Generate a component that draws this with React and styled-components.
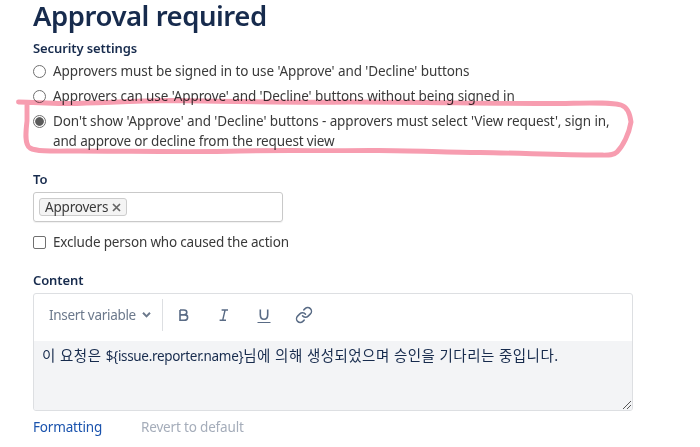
import React from "react";
import styled, { createGlobalStyle } from "styled-components";
import { Link as LinkIcon } from "lucide-react";

const GlobalStyle = createGlobalStyle`
  * { box-sizing: border-box; }
  body {
    margin: 0;
    background: #fff;
    color: #3a3a3a;
    font: 400 13.5px/20px "Noto Sans", "Noto Sans CJK KR", sans-serif;
  }
`;

const Page = styled.main`
  position: relative;
  width: 700px;
  height: 447px;
  padding-left: 33px;
  display: flex;
  flex-direction: column;
  align-items: flex-start;
`;

const Title = styled.h1`
  margin: 0 0 6px;
  height: 32px;
  color: #172b4d;
  font-size: 27.5px;
  font-weight: 600;
  line-height: 31px;
  white-space: nowrap;
  letter-spacing: -0.46px;
`;

const Label = styled.div`
  height: 20px;
  margin-bottom: 3px;
  color: #172b4d;
  font-size: 13px;
  font-weight: 600;
  white-space: nowrap;
  letter-spacing: -0.1px;
`;

const Option = styled.label`
  display: flex;
  align-items: flex-start;
  gap: 7px;
  margin-bottom: ${(p) => p.$gap ?? 5}px;
`;

const OptionText = styled.span`
  white-space: pre;
  letter-spacing: ${(p) => p.$tracking ?? -0.09}px;
`;

const Line = styled.span`
  display: block;
  letter-spacing: ${(p) => p.$tracking ?? -0.09}px;
`;

const Radio = styled.span`
  width: 13px;
  height: 13px;
  margin-top: 4px;
  border: 1px solid #707070;
  border-radius: 50%;
  background: ${(p) => (p.$on ? "radial-gradient(circle, #5a5a5a 3.9px, #fff 4.7px)" : "#fff")};
`;

const Checkbox = styled.span`
  width: 13px;
  height: 13px;
  margin-top: 4px;
  border: 1px solid #707070;
  border-radius: 2px;
  background: #fff;
`;

const TokenField = styled.div`
  display: flex;
  align-items: center;
  width: 250px;
  height: 30px;
  margin-bottom: 10px;
  padding-left: 5px;
  border: 1px solid #c9c9c9;
  border-radius: 3px;
  box-shadow: 0 1px 1px rgba(0, 0, 0, 0.06);
`;

const Token = styled.span`
  display: flex;
  align-items: center;
  gap: 4px;
  width: 88px;
  height: 18px;
  padding-left: 5px;
  border: 1px solid #ccc;
  border-radius: 3px;
  background: #f4f4f4;
  white-space: nowrap;
  letter-spacing: -0.2px;
`;

const Editor = styled.section`
  display: flex;
  flex-direction: column;
  width: 600px;
  height: 118px;
  margin-bottom: 6px;
  border: 1px solid #dddfe2;
  border-radius: 3px;
  overflow: hidden;
`;

const Toolbar = styled.div`
  display: flex;
  align-items: flex-start;
  height: 47px;
  padding: 5px 0 0 15px;
  color: #596b85;
`;

const VariableMenu = styled.div`
  display: flex;
  align-items: center;
  gap: 6px;
  width: 114px;
  height: 32px;
  border-right: 1px solid #dddfe2;
  color: #6c798c;
  white-space: nowrap;
  letter-spacing: -0.3px;
`;

const Tools = styled.div`
  display: grid;
  grid-template-columns: repeat(4, 40px);
  height: 32px;
  padding-left: 1px;
`;

const Tool = styled.span`
  display: flex;
  align-items: center;
  justify-content: center;
`;

const Body = styled.div`
  display: flex;
  flex: 1;
  justify-content: space-between;
  padding: 4px 1px 1px 8px;
  background: #f3f4f6;
  color: #172b4d;
`;

const BodyText = styled.p`
  margin: 0;
  font-size: 14.5px;
  line-height: 20px;
  letter-spacing: 0.46px;
  white-space: nowrap;
`;

const Variable = styled.span`
  font-size: 13.5px;
  letter-spacing: -0.32px;
`;

const Grip = styled.svg`
  align-self: flex-end;
`;

const Links = styled.div`
  display: grid;
  grid-template-columns: 108px auto;
  white-space: nowrap;
`;

const TextLink = styled.a`
  color: ${(p) => (p.$muted ? "#a5adba" : "#1a53ad")};
  letter-spacing: -0.17px;
`;

const Marker = styled.svg`
  position: absolute;
  left: 0;
  top: 0;
  mix-blend-mode: multiply;
  pointer-events: none;
`;

const Icon = ({ children }) => (
  <svg width="20" height="20" viewBox="0 0 20 20" fill="none" stroke="currentColor" strokeWidth="1.6">
    {children}
  </svg>
);

export default function App() {
  return (
    <>
      <GlobalStyle />
      <Page>
        <Title>Approval required</Title>
        <Label>Security settings</Label>
        <Option>
          <Radio />
          <OptionText>Approvers must be signed in to use 'Approve' and 'Decline' buttons</OptionText>
        </Option>
        <Option>
          <Radio />
          <OptionText>Approvers can use 'Approve' and 'Decline' buttons without being signed in</OptionText>
        </Option>
        <Option $gap={18}>
          <Radio $on />
          <OptionText>
            <Line>Don't show 'Approve' and 'Decline' buttons - approvers must select 'View request', sign in,</Line>
            <Line $tracking={-0.15}>and approve or decline from the request view</Line>
          </OptionText>
        </Option>
        <Label>To</Label>
        <TokenField>
          <Token>
            Approvers
            <svg width="9" height="9" viewBox="0 0 9 9" stroke="#666" strokeWidth="1.7">
              <path d="M1 1L8 8M8 1L1 8" />
            </svg>
          </Token>
        </TokenField>
        <Option $gap={18}>
          <Checkbox />
          <OptionText $tracking={-0.18}>Exclude person who caused the action</OptionText>
        </Option>
        <Label>Content</Label>
        <Editor>
          <Toolbar>
            <VariableMenu>
              Insert variable
              <svg width="9" height="7" viewBox="0 0 9 7" fill="none" stroke="#6c798c" strokeWidth="2">
                <path d="M1 0.8L4.5 4.4L8 0.8" />
              </svg>
            </VariableMenu>
            <Tools>
              <Tool>
                <Icon>
                  <path d="M6 5V15.2H10.2C12.6 15.2 13.6 14 13.6 12.4C13.6 10.8 12.5 9.9 10.8 9.9H6M6 5H10C11.9 5 12.8 5.9 12.8 7.3C12.8 8.9 11.8 9.9 10 9.9" />
                </Icon>
              </Tool>
              <Tool>
                <Icon>
                  <path d="M7.6 5H14M5.6 15.2H12M11.1 5L8.7 15.2" strokeWidth="1.4" />
                </Icon>
              </Tool>
              <Tool>
                <Icon>
                  <path d="M6.3 4.4V9.8C6.3 12.6 7.6 14.2 10 14.2C12.4 14.2 13.7 12.6 13.7 9.8V4.4" />
                  <path d="M3.5 17.5H16.5" strokeWidth="1.1" />
                </Icon>
              </Tool>
              <Tool>
                <LinkIcon size={18} strokeWidth={2} />
              </Tool>
            </Tools>
          </Toolbar>
          <Body>
            <BodyText>
              이 요청은 <Variable>{"${issue.reporter.name}"}</Variable>님에 의해 생성되었으며 승인을 기다리는 중입니다.
            </BodyText>
            <Grip width="8" height="8" viewBox="0 0 8 8" stroke="#555" strokeWidth="1">
              <path d="M0 8L8 0M4 8L8 4" />
            </Grip>
          </Body>
        </Editor>
        <Links>
          <TextLink>Formatting</TextLink>
          <TextLink $muted>Revert to default</TextLink>
        </Links>
        <Marker width="700" height="170" fill="none" stroke="#f79db0" strokeLinecap="round" strokeLinejoin="round">
          <path
            strokeWidth="4.9"
            d="M18.5 102C35 102 50 104 69 103.5C100 103 130 101 170 100.5C220 101 280 103 350 102C430 102 500 104 560 103.5C590 103 610 102 621 105C628 107 630 114 631 122C629 134 623 146 617 152C613 156 607 155 598 155C560 155 520 153 480 152.5C440 152 400 150 370 150.5C320 151 280 150 240 151C190 152.5 130 151 80 151C55 151 37 152 30 148C24 144 26 130 27 121V104"
          />
        </Marker>
      </Page>
    </>
  );
}
